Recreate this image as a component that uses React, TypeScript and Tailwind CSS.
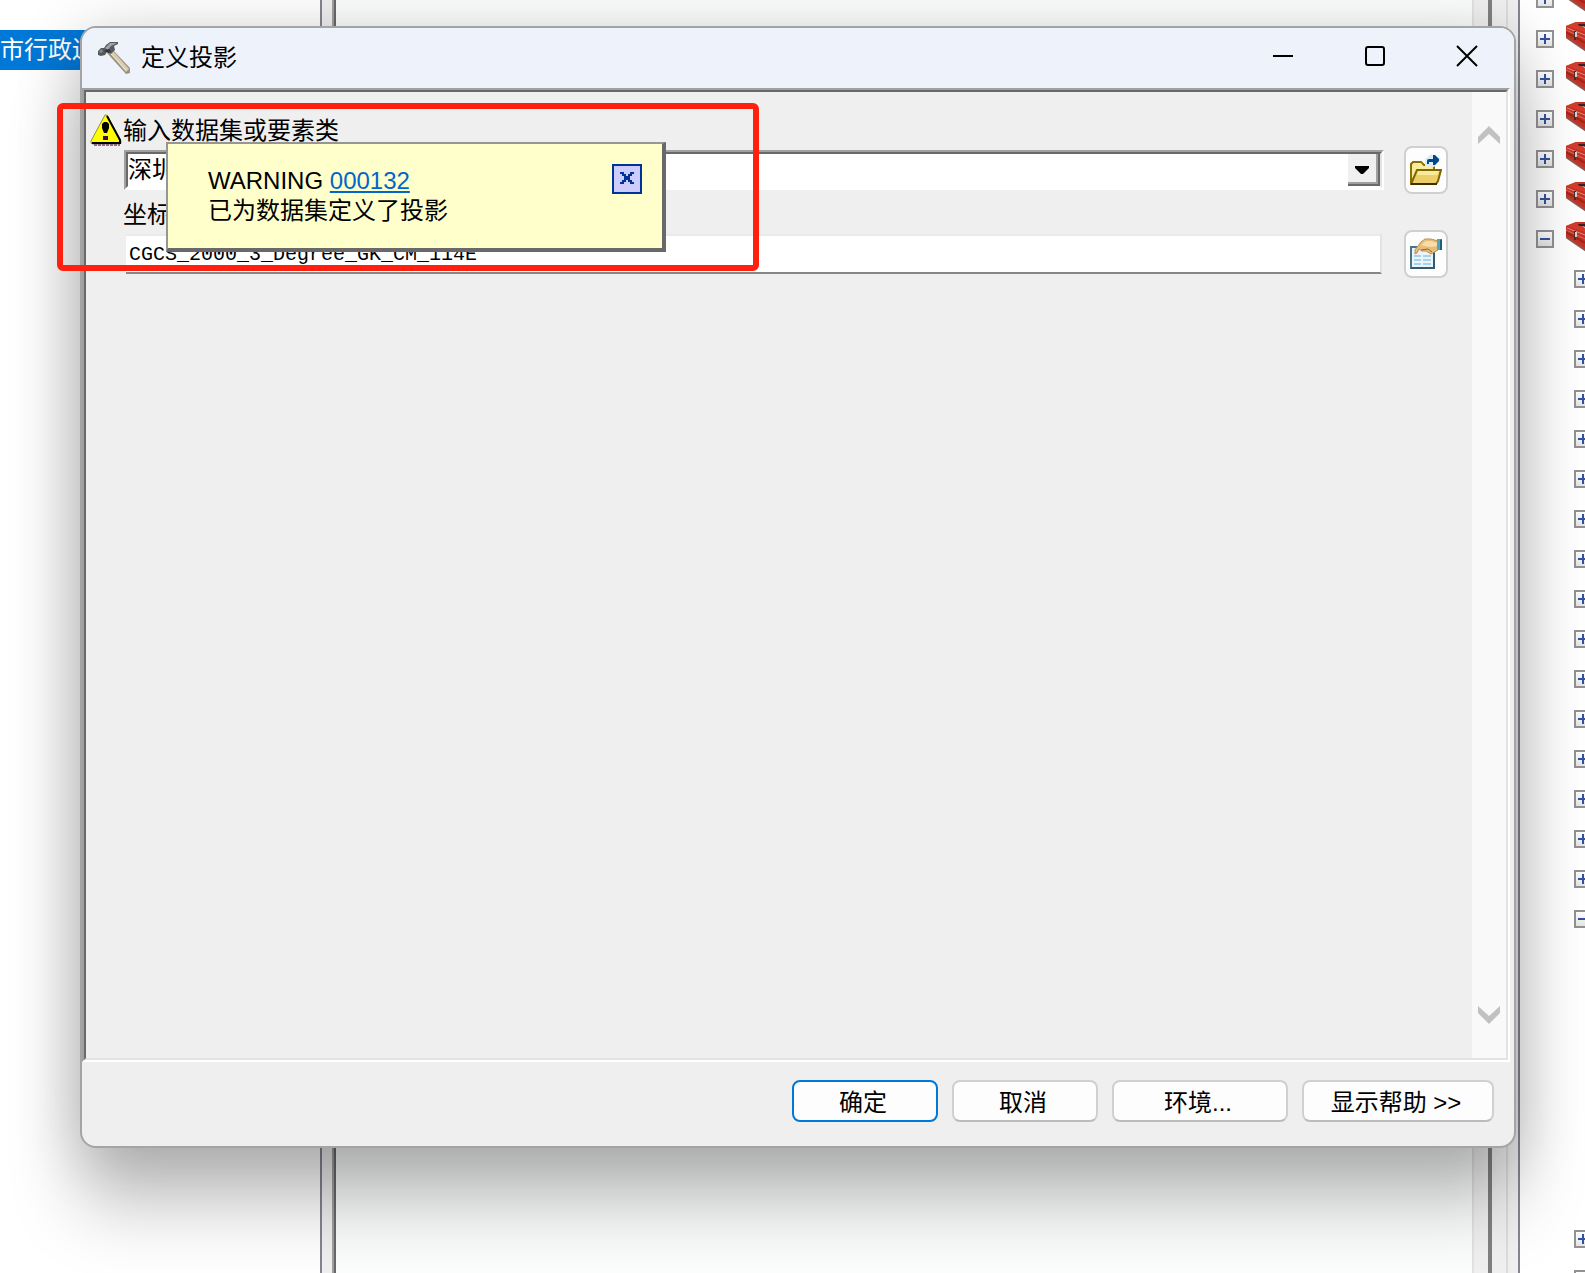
type TreeRow = {
  open?: boolean
  child?: boolean
  blank?: boolean
}

const toolboxes: TreeRow[] = [{}, {}, {}, {}, {}, {}, { open: true }]

const treeRows: TreeRow[] = [
  ...toolboxes,
  ...Array.from({ length: 16 }, () => ({ child: true })),
  { child: true, open: true },
  ...Array.from({ length: 7 }, () => ({ blank: true })),
  { child: true },
  { child: true },
]

const App: React.FC = () => {
  return (
    <div className="relative h-screen min-h-[640px] overflow-hidden bg-white font-['Liberation_Sans','Noto_Sans_CJK_SC',sans-serif] text-2xl text-black">
      <Workspace />
      <Dialog />
      <div className="pointer-events-none absolute top-[103px] left-[57px] h-[168px] w-[702px] rounded-md border-6 border-[#ff2010]" />
    </div>
  )
}

export default App

const Workspace: React.FC = () => {
  return (
    <div className="flex h-full">
      <div className="w-[322px] shrink-0 border-r-2 border-[#83868f] pt-[30px]">
        <div className="h-10 w-24 overflow-hidden bg-[#0078d7] leading-10 whitespace-nowrap text-white">
          市行政边
        </div>
      </div>
      <div className="w-3 shrink-0 border-r-2 border-[#a0a0a0] bg-[#f0f0f0]" />
      <div className="grow border-l-2 border-[#696969] bg-[#fbfefc]" />
      <div className="w-4 shrink-0 border-l-2 border-[#e3e3e3] bg-[#f0f0f0]" />
      <div className="w-1 shrink-0 bg-[#808080]" />
      <div className="w-4 shrink-0 border-r-2 border-[#dcdcdc] bg-[#f0f0f0]" />
      <div className="w-3 shrink-0 border-r-2 border-[#83868f] bg-[#f0f0f0]" />
      <div className="w-[65px] shrink-0 overflow-hidden">
        <div className="-mt-[21px]">
          {treeRows.map((row, index) => (
            <TreeItem {...row} key={index} />
          ))}
        </div>
      </div>
    </div>
  )
}

const TreeItem: React.FC<TreeRow> = ({ open, child, blank }) => {
  if (blank) {
    return <div className="h-10" />
  }

  return (
    <div
      className={
        child
          ? "flex h-10 items-center pl-[54px]"
          : "flex h-10 items-center gap-3 pl-4"
      }
    >
      <button
        type="button"
        aria-label={open ? "Collapse" : "Expand"}
        className="size-[18px] shrink-0 border-2 border-[#929292] bg-linear-to-b from-white to-[#e4e4e4]"
      >
        <svg viewBox="0 0 14 14" className="size-[14px]" stroke="#3450a0" strokeWidth="2">
          <path d={open ? "M2 7H12" : "M2 7H12M7 2V12"} />
        </svg>
      </button>
      {!child && <ToolboxIcon />}
    </div>
  )
}

const Dialog: React.FC = () => {
  return (
    <div
      role="dialog"
      aria-labelledby="dialog-title"
      className="absolute top-[26px] right-[69px] bottom-[125px] left-20 flex flex-col rounded-2xl border-2 border-[#a4a4a4] bg-[#efefef] bg-clip-padding shadow-[0_60px_72px_rgba(0,0,0,0.22),0_8px_64px_rgba(0,0,0,0.2)]"
    >
      <div className="flex h-[60px] shrink-0 items-center justify-between rounded-t-[14px] bg-[#eef3fb]">
        <div className="flex items-center gap-[11px] pl-4">
          <HammerIcon />
          <h1 id="dialog-title">定义投影</h1>
        </div>
        <div className="flex h-full pr-px">
          <WindowButton label="Minimize" path="M1 11H21" />
          <WindowButton
            label="Maximize"
            path="M4 2H18Q20 2 20 4V18Q20 20 18 20H4Q2 20 2 18V4Q2 2 4 2Z"
          />
          <WindowButton label="Close" path="M1 1L21 21M21 1L1 21" />
        </div>
      </div>

      <div className="mr-1 flex min-h-0 grow border-2 border-t-[#a0a0a0] border-r-white border-b-white border-l-[#a0a0a0]">
        <div className="relative flex grow border-2 border-t-[#696969] border-r-[#e3e3e3] border-b-[#e3e3e3] border-l-[#696969]">
          <Parameters />
          <div className="flex w-[34px] shrink-0 flex-col items-center justify-between bg-[#f9f9f9] py-[34px]">
            <button type="button" aria-label="Scroll up">
              <svg viewBox="0 0 22 18" className="h-[18px] w-[22px]" fill="#c1c1c1">
                <path d="M0 11L11 0L22 11V18L11 8L0 18Z" />
              </svg>
            </button>
            <button type="button" aria-label="Scroll down">
              <svg viewBox="0 0 22 18" className="h-[18px] w-[22px]" fill="#c1c1c1">
                <path d="M0 7L11 18L22 7V0L11 10L0 0Z" />
              </svg>
            </button>
          </div>
          <WarningTip />
        </div>
      </div>

      <div className="flex h-[84px] shrink-0 items-start justify-end gap-[14px] pt-[18px] pr-5">
        <button
          type="button"
          className="h-[42px] w-[146px] rounded-lg border-2 border-[#0078d7] bg-[#fdfdfd] pt-[3px] pr-1"
        >
          确定
        </button>
        <button
          type="button"
          className="h-[42px] w-[146px] rounded-lg border-2 border-[#d0d0d0] border-b-[#bcbcbc] bg-[#fdfdfd] pt-[3px] pr-1"
        >
          取消
        </button>
        <button
          type="button"
          className="h-[42px] w-[176px] rounded-lg border-2 border-[#d0d0d0] border-b-[#bcbcbc] bg-[#fdfdfd] pt-[3px] pr-1"
        >
          环境...
        </button>
        <button
          type="button"
          className="h-[42px] w-[192px] rounded-lg border-2 border-[#d0d0d0] border-b-[#bcbcbc] bg-[#fdfdfd] pt-[3px] pr-1"
        >
          显示帮助 &gt;&gt;
        </button>
      </div>
    </div>
  )
}

const Parameters: React.FC = () => {
  return (
    <form className="grow pt-[22px] pr-6 pl-1">
      <div className="flex h-8 items-center gap-px">
        <WarningIcon />
        <label htmlFor="dataset" className="pt-[2px]">
          输入数据集或要素类
        </label>
      </div>
      <div className="flex h-12 items-center gap-5 pl-[34px]">
        <div className="h-10 grow border-2 border-t-[#a0a0a0] border-r-white border-b-white border-l-[#a0a0a0]">
          <div className="flex h-full border-2 border-t-[#696969] border-r-[#e3e3e3] border-b-white border-l-[#696969] bg-white">
            <select id="dataset" className="h-8 grow appearance-none bg-white leading-8 outline-none">
              <option>深圳</option>
            </select>
            <div className="pointer-events-none flex h-8 w-8 items-center justify-center border-r-2 border-b-2 border-[#696969] bg-[#f0f0f0]">
              <div className="flex size-full items-center justify-center border-r-2 border-b-2 border-[#a0a0a0] pt-1">
                <svg viewBox="0 0 14 8" className="h-2 w-[14px]">
                  <path d="M0 0H14V2L8 8H6L0 2Z" />
                </svg>
              </div>
            </div>
          </div>
        </div>
        <button
          type="button"
          aria-label="Browse"
          className="flex h-12 w-11 shrink-0 items-center justify-center rounded-lg border-2 border-[#d0d0d0] bg-[#fdfdfd]"
        >
          <FolderIcon />
        </button>
      </div>
      <div className="flex h-9 items-center pt-[6px] pl-[33px]">
        <label htmlFor="coordinates">坐标</label>
      </div>
      <div className="flex h-12 items-center gap-[22px] pl-9">
        <input
          id="coordinates"
          type="text"
          readOnly
          defaultValue="CGCS_2000_3_Degree_GK_CM_114E"
          className="h-10 min-w-0 grow border-t-2 border-r-2 border-b-2 border-t-[#eaeaea] border-r-[#e3e3e3] border-b-[#868686] bg-white pl-[3px] font-['Liberation_Mono',monospace] text-xl outline-none"
        />
        <button
          type="button"
          aria-label="Properties"
          className="flex h-12 w-11 shrink-0 items-center justify-center rounded-lg border-2 border-[#d0d0d0] bg-[#fdfdfd]"
        >
          <PropertiesIcon />
        </button>
      </div>
    </form>
  )
}

const WarningTip: React.FC = () => {
  return (
    <div
      role="alert"
      className="absolute top-[50px] left-20 flex h-[110px] w-[500px] items-start justify-between border-t-2 border-r-4 border-b-4 border-l-2 border-t-[#969696] border-r-[#696969] border-b-[#696969] border-l-[#969696] bg-[#ffffcc] pt-5 pr-5 pl-10"
    >
      <div className="pt-[2px] leading-[30px]">
        <p>
          WARNING{" "}
          <a href="#000132" className="text-[#0066cc] underline decoration-2 underline-offset-2">
            000132
          </a>
        </p>
        <p>已为数据集定义了投影</p>
      </div>
      <button
        type="button"
        aria-label="Close warning"
        className="flex size-[30px] items-center justify-center border-2 border-[#003399] bg-[#ccccff] pb-[2px]"
      >
        <svg viewBox="0 0 14 12" className="h-3 w-[14px]" fill="#003399">
          <path d="M0 0H4V2H6V4H8V2H10V0H14V2H12V4H10V8H12V10H14V12H10V10H8V8H6V10H4V12H0V10H2V8H4V4H2V2H0Z" />
        </svg>
      </button>
    </div>
  )
}

const WindowButton: React.FC<{ label: string; path: string }> = ({
  label,
  path,
}) => {
  return (
    <button
      type="button"
      aria-label={label}
      className="flex h-full w-[92px] items-center justify-center pb-1"
    >
      <svg viewBox="0 0 22 22" className="size-[22px]" fill="none" stroke="#000" strokeWidth="2">
        <path d={path} />
      </svg>
    </button>
  )
}

const HammerIcon: React.FC = () => {
  return (
    <svg viewBox="0 0 32 32" className="size-8">
      <path d="M9 11L14 7L32 26V31L28 32Z" fill="#9a917f" />
      <path d="M12 11L15 9L31 27L28 30Z" fill="#d8cbb2" />
      <path d="M13 12L28 28" stroke="#f0e8d8" strokeWidth="1" />
      <path d="M0 9L3 6L6 6L8 3L12 0H20V2L16 4L17 8L13 12L9 10L7 13L3 14L0 13Z" fill="#55585c" />
      <path d="M7 6L12 1H19L13 4L10 8Z" fill="#9fa3a7" />
      <path d="M1 9L4 7L5 10L2 11Z" fill="#85888c" />
      <path d="M6 9L10 7L13 9L11 11Z" fill="#34363a" />
    </svg>
  )
}

const WarningIcon: React.FC = () => {
  return (
    <svg viewBox="0 0 32 32" className="size-8 shrink-0">
      <path
        d="M15 1L1 27Q0 30 3 30H29Q32 30 31 27L17 1Z"
        fill="#ffff00"
        stroke="#94902c"
        strokeWidth="1"
        strokeLinejoin="round"
      />
      <path d="M17 2L30 26V29H2" fill="none" stroke="#000" strokeWidth="2" />
      <path d="M4 31H30" stroke="#8a6c80" strokeWidth="2" strokeDasharray="3 1" />
      <path d="M14 8H17L19 10V14L17 19H14L12 14V10Z" fill="#000" />
      <rect x="13" y="22" width="5" height="4" fill="#3d1048" />
    </svg>
  )
}

const FolderIcon: React.FC = () => {
  return (
    <svg viewBox="0 0 32 32" className="size-8 shrink-0">
      <path d="M1 30V10L3 8H11L14 11H24V16" fill="#f3e184" stroke="#8a7000" strokeWidth="2" />
      <path d="M2 12L4 9H11L13 12H23V15H8L4 24L2 28Z" fill="#f8ec9f" />
      <path d="M1 30L7 16H31L28 27L26 30Z" fill="#eccf68" stroke="#806600" strokeWidth="2" />
      <path d="M8 17H29L27 21H7Z" fill="#f9ea9b" />
      <path d="M1 30H27" stroke="#3d3000" strokeWidth="2" />
      <path d="M15 12V5L21 0L31 5L24 13Z" fill="#dcebf8" />
      <path d="M17 10V7Q17 5 19 5H23V1H25L29 5V7L25 11H23V8H19V10Z" fill="#00498c" />
    </svg>
  )
}

const PropertiesIcon: React.FC = () => {
  return (
    <svg viewBox="0 0 32 32" className="size-8 shrink-0">
      <path d="M1 9H24V30H1Z" fill="#e9f4fb" stroke="#4b7388" strokeWidth="2" />
      <path d="M24 9V30H1" fill="none" stroke="#35596d" strokeWidth="2" />
      <path d="M4 18H11M13 18H21M4 22H11M13 22H21M4 26H11M13 26H21" stroke="#a9d2ea" strokeWidth="2" />
      <path
        d="M5 16V12L11 4L15 1H21L28 3V12L21 16L16 13L12 13L9 11L7 15Z"
        fill="#e7bd7c"
        stroke="#c0904f"
        strokeWidth="1"
      />
      <path d="M11 7L16 3H21L27 5V8L21 9L15 8Z" fill="#f8dda9" />
      <path d="M11 12L18 11L22 14" fill="none" stroke="#99652c" strokeWidth="1" />
      <path d="M27 1H32V12H27Z" fill="#55a5c0" />
      <path d="M30 2L32 1V12H30Z" fill="#1d607c" />
    </svg>
  )
}

const ToolboxIcon: React.FC = () => {
  return (
    <svg viewBox="0 0 32 32" className="-mt-[2px] size-8 shrink-0">
      <path d="M0 4L10 0H22L32 6V24L22 30L0 15Z" fill="#c43225" />
      <path d="M0 4L10 0L24 5L19 10Z" fill="#d43d2e" />
      <path d="M1 6L19 13" fill="none" stroke="#e98a7c" strokeWidth="1" />
      <path d="M0 8L19 17" fill="none" stroke="#d96a5c" strokeWidth="1" />
      <path d="M0 10L19 21" fill="none" stroke="#a3241a" strokeWidth="2" />
      <path d="M0 15L22 30" fill="none" stroke="#93544e" strokeWidth="2" />
      <path d="M12 2H20V6L16 4L13 4Z" fill="#332422" />
      <path d="M16 4L20 5V7Z" fill="#d8c8c4" />
      <path d="M8 9H10V18H8Z" fill="#4a302c" />
      <path d="M9 10H11V15H9Z" fill="#d8cfca" />
    </svg>
  )
}
